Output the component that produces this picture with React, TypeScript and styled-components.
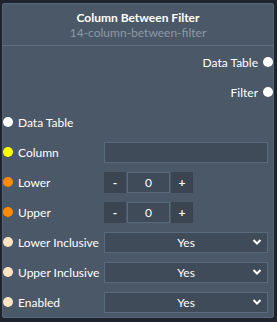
import styled, { createGlobalStyle } from "styled-components";

const GlobalStyle = createGlobalStyle`
  html, body {
    margin: 0;
    padding: 0;
    background-color: #1d242e;
    font-family: "Lato", "Noto Sans", sans-serif;
  }
`;

const Node = styled.div`
  margin: 3px 0 0 2px;
  width: 272px;
  height: 315px;
  box-sizing: border-box;
  background-color: #4b5867;
  border: 1px solid #56657a;
  border-radius: 2px;
  color: #ffffff;
`;

const Header = styled.div`
  height: 42px;
  box-sizing: border-box;
  border-bottom: 1px solid #5f6e7e;
  display: flex;
  flex-direction: column;
  align-items: center;
  padding-top: 6px;
`;

const Title = styled.div`
  font-size: 12px;
  font-weight: 700;
  line-height: 15px;
`;

const Subtitle = styled.div`
  font-size: 12px;
  line-height: 15px;
  color: #8b99a8;
`;

const Body = styled.div`
  display: flex;
  flex-direction: column;
  padding-top: 1px;
`;

const Row = styled.div<{ $out?: boolean }>`
  height: 30px;
  display: flex;
  align-items: center;
  justify-content: ${(p) => (p.$out ? "flex-end" : "flex-start")};
  padding: 0 ${(p) => (p.$out ? "0" : "4px")} 0 ${(p) => (p.$out ? "0" : "0")};
  font-size: 12px;
`;

const Dot = styled.span<{ $color: string }>`
  width: 10px;
  height: 10px;
  border-radius: 50%;
  background-color: ${(p) => p.$color};
  flex: none;
`;

const OutLabel = styled.span`
  margin-right: 5px;
`;

const OutDot = styled(Dot)`
  margin-right: 0;
  transform: translateX(0px);
`;

const InDot = styled(Dot)`
  margin-left: 0;
`;

const Label = styled.span`
  width: 86px;
  margin-left: 5px;
  white-space: nowrap;
`;

const TextInput = styled.div`
  width: 164px;
  height: 21px;
  box-sizing: border-box;
  background-color: #3f4b58;
  border: 1px solid #586a7c;
`;

const Stepper = styled.div`
  display: flex;
  height: 21px;
  gap: 1px;
`;

const StepButton = styled.div`
  width: 22px;
  background-color: #3a4551;
  display: flex;
  align-items: center;
  justify-content: center;
  font-weight: 700;
  font-size: 12px;
`;

const StepValue = styled.div`
  width: 43px;
  box-sizing: border-box;
  background-color: #3f4b58;
  border: 1px solid #586a7c;
  display: flex;
  align-items: center;
  justify-content: center;
  font-size: 12px;
`;

const Select = styled.div`
  width: 164px;
  height: 21px;
  box-sizing: border-box;
  background-color: #3f4b58;
  border: 1px solid #586a7c;
  display: flex;
  align-items: center;
  justify-content: center;
  position: relative;
  font-size: 12px;
`;

const Chevron = styled.svg`
  position: absolute;
  right: 5px;
  top: 5px;
`;

function SelectBox({ value }: { value: string }) {
  return (
    <Select>
      {value}
      <Chevron width="10" height="8" viewBox="0 0 10 8">
        <path d="M1.5 2 L5 5.5 L8.5 2" stroke="#ffffff" strokeWidth="2" fill="none" />
      </Chevron>
    </Select>
  );
}

function StepperBox({ value }: { value: string }) {
  return (
    <Stepper>
      <StepButton>-</StepButton>
      <StepValue>{value}</StepValue>
      <StepButton>+</StepButton>
    </Stepper>
  );
}

const inputs = [
  { label: "Data Table", color: "#ffffff" },
  { label: "Column", color: "#ffff00", control: <TextInput /> },
  { label: "Lower", color: "#ff8c00", control: <StepperBox value="0" /> },
  { label: "Upper", color: "#ff8c00", control: <StepperBox value="0" /> },
  { label: "Lower Inclusive", color: "#ffe4c4", control: <SelectBox value="Yes" /> },
  { label: "Upper Inclusive", color: "#ffe4c4", control: <SelectBox value="Yes" /> },
  { label: "Enabled", color: "#ffe4c4", control: <SelectBox value="Yes" /> },
];

export default function App() {
  return (
    <>
      <GlobalStyle />
      <Node>
        <Header>
          <Title>Column Between Filter</Title>
          <Subtitle>14-column-between-filter</Subtitle>
        </Header>
        <Body>
          <Row $out>
            <OutLabel>Data Table</OutLabel>
            <OutDot $color="#ffffff" />
          </Row>
          <Row $out>
            <OutLabel>Filter</OutLabel>
            <OutDot $color="#ffffff" />
          </Row>
          {inputs.map((i) => (
            <Row key={i.label}>
              <InDot $color={i.color} />
              <Label>{i.label}</Label>
              {i.control}
            </Row>
          ))}
        </Body>
      </Node>
    </>
  );
}
